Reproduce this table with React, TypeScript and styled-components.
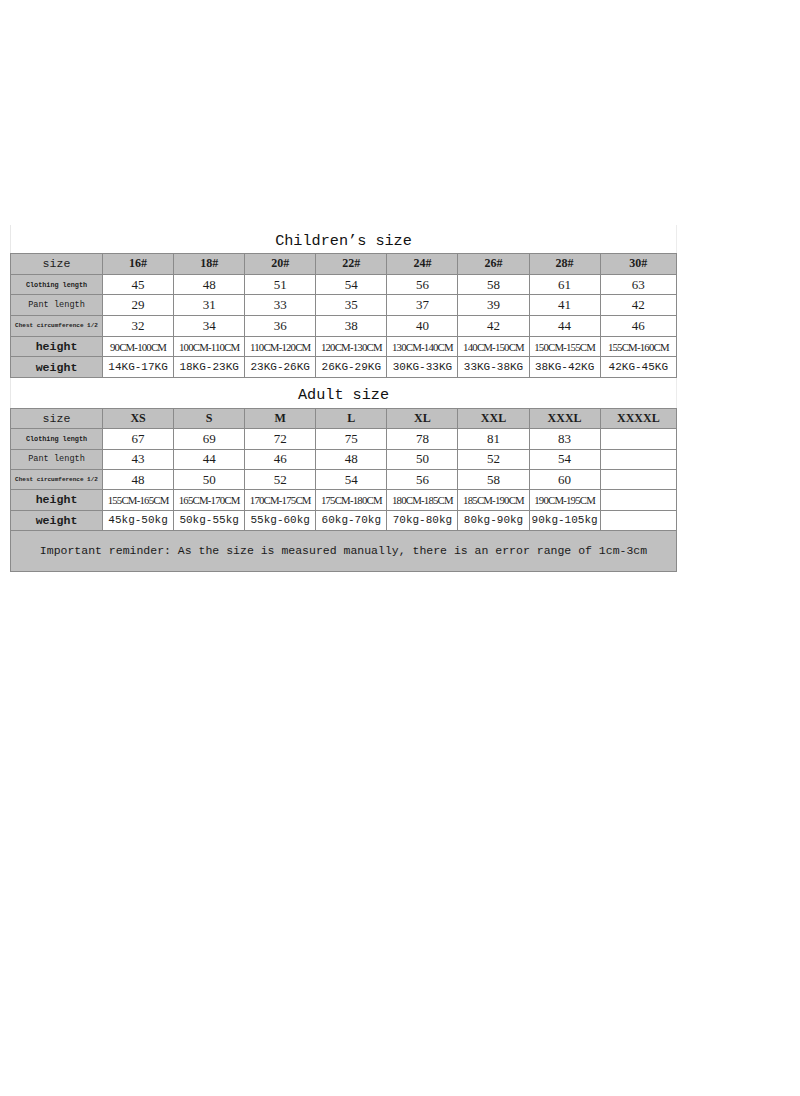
import React from "react";
import styled, { createGlobalStyle } from "styled-components";

const Global = createGlobalStyle`
  html, body { margin: 0; padding: 0; background: #ffffff; }
  body { font-family: "Liberation Serif", serif; color: #1c1c1c; }
`;

const Page = styled.div`
  width: 800px;
  height: 1096px;
  padding: 225px 0 0 10px;
  box-sizing: border-box;
`;

const Sheet = styled.div`
  width: 667px;
  display: flex;
  flex-direction: column;
`;

const Title = styled.div<{ $h: number; $shift: number }>`
  height: ${({ $h }) => $h}px;
  padding-top: ${({ $shift }) => $shift}px;
  display: flex;
  align-items: center;
  justify-content: center;
  font-family: "Liberation Mono", monospace;
  font-size: 15.2px;
  color: #111;
  border-left: 1px solid #e8e8e8;
  border-right: 1px solid #ececec;
  box-sizing: border-box;
`;

const Grid = styled.div<{ $row: number; $extra?: number }>`
  display: grid;
  grid-template-columns: 91px repeat(7, 70.1px) 1fr;
  grid-template-rows: repeat(6, ${({ $row }) => $row}px) ${({ $extra }) =>
      $extra ? `${$extra}px` : ""};
  gap: 1px;
  padding: 1px;
  background: #8a8a8a;
`;

const Cell = styled.div<{ $gray?: boolean }>`
  background: ${({ $gray }) => ($gray ? "#c0c0c0" : "#ffffff")};
  display: flex;
  align-items: center;
  justify-content: center;
  white-space: nowrap;
  overflow: hidden;
  font-family: "Liberation Serif", serif;
  font-size: 13px;
`;

const HeadCell = styled(Cell)`
  font-weight: bold;
  font-size: 12px;
`;

const Label = styled(Cell)<{ $size: number; $bold?: boolean }>`
  font-family: "Liberation Mono", monospace;
  font-size: ${({ $size }) => $size}px;
  font-weight: ${({ $bold }) => ($bold ? "bold" : "normal")};
`;

const RangeCell = styled(Cell)`
  font-size: 10.8px;
  letter-spacing: -0.8px;
`;

const MonoCell = styled(Cell)`
  font-family: "Liberation Mono", monospace;
  font-size: 11px;
`;

const Reminder = styled.div`
  grid-column: 1 / -1;
  background: #c0c0c0;
  display: flex;
  align-items: center;
  justify-content: center;
  font-family: "Liberation Mono", monospace;
  font-size: 11.5px;
  color: #1a1a1a;
`;

type Table = {
  head: string[];
  clothing: string[];
  pant: string[];
  chest: string[];
  height: string[];
  weight: string[];
};

const children: Table = {
  head: ["16#", "18#", "20#", "22#", "24#", "26#", "28#", "30#"],
  clothing: ["45", "48", "51", "54", "56", "58", "61", "63"],
  pant: ["29", "31", "33", "35", "37", "39", "41", "42"],
  chest: ["32", "34", "36", "38", "40", "42", "44", "46"],
  height: [
    "90CM-100CM", "100CM-110CM", "110CM-120CM", "120CM-130CM",
    "130CM-140CM", "140CM-150CM", "150CM-155CM", "155CM-160CM",
  ],
  weight: [
    "14KG-17KG", "18KG-23KG", "23KG-26KG", "26KG-29KG",
    "30KG-33KG", "33KG-38KG", "38KG-42KG", "42KG-45KG",
  ],
};

const adult: Table = {
  head: ["XS", "S", "M", "L", "XL", "XXL", "XXXL", "XXXXL"],
  clothing: ["67", "69", "72", "75", "78", "81", "83", ""],
  pant: ["43", "44", "46", "48", "50", "52", "54", ""],
  chest: ["48", "50", "52", "54", "56", "58", "60", ""],
  height: [
    "155CM-165CM", "165CM-170CM", "170CM-175CM", "175CM-180CM",
    "180CM-185CM", "185CM-190CM", "190CM-195CM", "",
  ],
  weight: [
    "45kg-50kg", "50kg-55kg", "55kg-60kg", "60kg-70kg",
    "70kg-80kg", "80kg-90kg", "90kg-105kg", "",
  ],
};

const Rows: React.FC<{ t: Table }> = ({ t }) => (
  <>
    <Label $gray $size={11.6}>size</Label>
    {t.head.map((h) => <HeadCell key={h} $gray>{h}</HeadCell>)}

    <Label $gray $bold $size={6.8}>Clothing length</Label>
    {t.clothing.map((v, i) => <Cell key={i}>{v}</Cell>)}

    <Label $gray $size={8.6}>Pant length</Label>
    {t.pant.map((v, i) => <Cell key={i}>{v}</Cell>)}

    <Label $gray $bold $size={6}>Chest circumference 1/2</Label>
    {t.chest.map((v, i) => <Cell key={i}>{v}</Cell>)}

    <Label $gray $bold $size={11.6}>height</Label>
    {t.height.map((v, i) => <RangeCell key={i}>{v}</RangeCell>)}

    <Label $gray $bold $size={11.6}>weight</Label>
    {t.weight.map((v, i) => <MonoCell key={i}>{v}</MonoCell>)}
  </>
);

export default function App() {
  return (
    <Page>
      <Global />
      <Sheet>
        <Title $h={28} $shift={4}>Children’s size</Title>
        <Grid $row={19.7}>
          <Rows t={children} />
        </Grid>
        <Title $h={30} $shift={3}>Adult size</Title>
        <Grid $row={19.3} $extra={40}>
          <Rows t={adult} />
          <Reminder>
            Important reminder: As the size is measured manually, there is an error range of 1cm-3cm
          </Reminder>
        </Grid>
      </Sheet>
    </Page>
  );
}
